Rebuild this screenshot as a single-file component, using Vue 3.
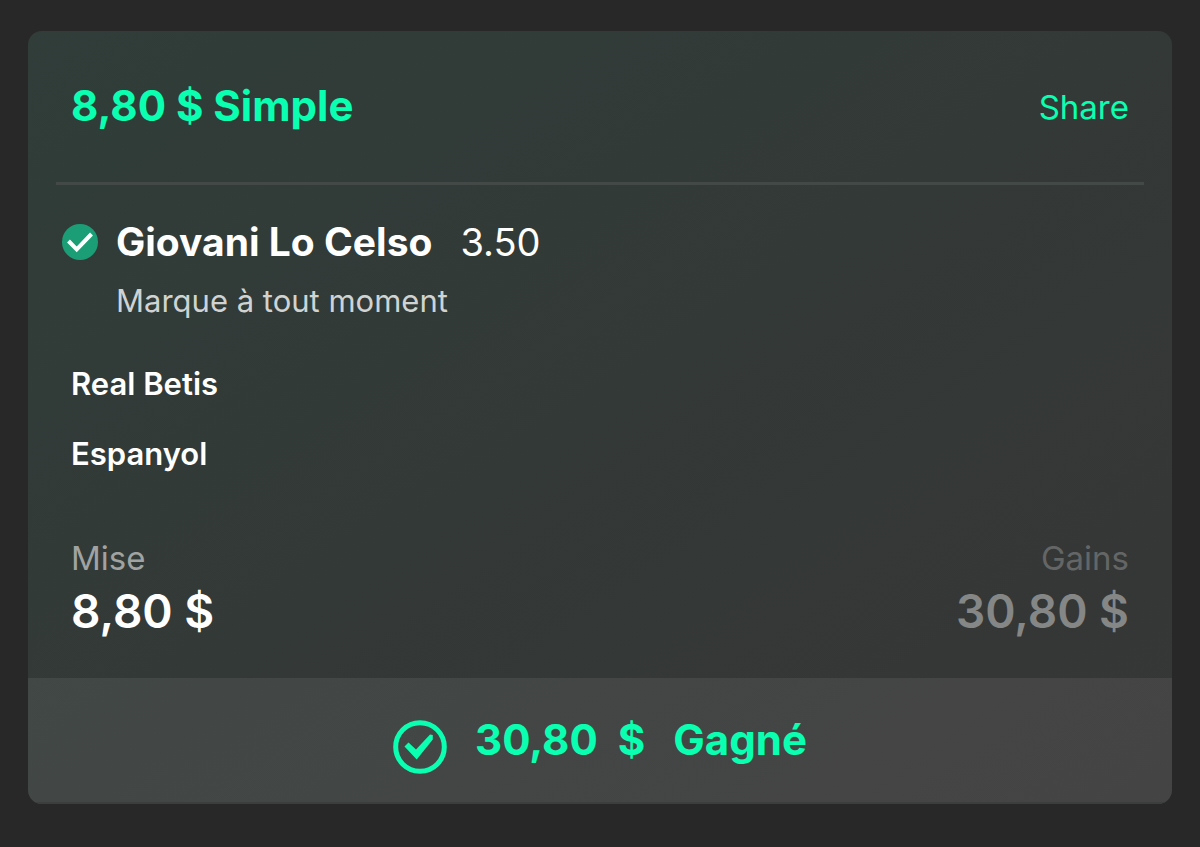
<script setup>
const bet = { stake: '8,80 $', type: 'Simple', player: 'Giovani Lo Celso', odds: '3.50', market: 'Marque à tout moment', teams: ['Real Betis', 'Espanyol'], gains: '30,80 $' }
</script>

<template>
  <main class="page">
    <article class="card">
      <div class="body">
        <header class="head">
          <h1 class="title">{{ bet.stake }} {{ bet.type }}</h1>
          <button class="share" type="button">Share</button>
        </header>
        <section class="selection">
          <svg class="tick" viewBox="0 0 36 36" aria-hidden="true">
            <circle cx="18" cy="18" r="18" fill="#1b9e75" />
            <path d="M6.5 17 14.7 25.3 29.5 10" fill="none" stroke="#fff" stroke-width="4" />
          </svg>
          <h2 class="player">{{ bet.player }}</h2>
          <span class="odds">{{ bet.odds }}</span>
        </section>
        <p class="market">{{ bet.market }}</p>
        <ul class="teams">
          <li v-for="team in bet.teams" :key="team">{{ team }}</li>
        </ul>
        <dl class="amounts">
          <div>
            <dt>Mise</dt>
            <dd>{{ bet.stake }}</dd>
          </div>
          <div class="gains">
            <dt>Gains</dt>
            <dd>{{ bet.gains }}</dd>
          </div>
        </dl>
      </div>
      <footer class="result">
        <svg class="won" viewBox="0 0 54 54" aria-hidden="true">
          <circle cx="27" cy="27" r="24.3" fill="none" stroke="#0bffb0" stroke-width="5" />
          <path d="M11.5 26.5 15.5 22.5 23 29.5 37 14.5 39.8 15V19.5L23.7 39.5Z" fill="#0bffb0" />
        </svg>
        <span>30,80</span><span>$</span><span class="label">Gagné</span>
      </footer>
    </article>
  </main>
</template>

<style>
body {
  margin: 0;
  background: #282828;
}
</style>

<style scoped>
.page {
  padding: 31px 28px 43px;
  font-family: Inter, "Liberation Sans", sans-serif;
  color: #fff;
}
.card {
  overflow: hidden;
  border-radius: 14px;
  background: linear-gradient(to bottom right, #303d39 0%, #333937 50%, #363636 100%);
}
.body {
  padding: 0 28px 36px;
}
.head {
  display: flex;
  align-items: center;
  justify-content: space-between;
  padding: 49px 15px 50px;
  border-bottom: 3px solid #424947;
}
h1, h2, p, ul, dl, dd {
  margin: 0;
}
.title {
  font-size: 42px;
  line-height: 52px;
  font-weight: 700;
  color: #0bffb0;
}
.share {
  padding: 2px 0 0;
  border: 0;
  background: none;
  font: inherit;
  font-size: 33px;
  line-height: 40px;
  color: #0bffb0;
}
.selection {
  display: flex;
  align-items: center;
  padding: 32px 0 0 6px;
}
.tick {
  width: 36px;
  height: 36px;
}
.player {
  margin: 0 28px 0 18px;
  font-size: 39px;
  line-height: 50px;
  font-weight: 700;
}
.odds {
  font-size: 38px;
}
.market {
  padding: 14px 0 0 60px;
  font-size: 31px;
  line-height: 40px;
  color: #d0d3d2;
}
.teams {
  display: grid;
  gap: 30px;
  padding: 43px 15px 0;
  list-style: none;
  font-size: 31px;
  line-height: 40px;
  font-weight: 600;
}
.amounts {
  display: flex;
  justify-content: space-between;
  padding: 62px 15px 0;
}
dt {
  font-size: 33px;
  line-height: 44px;
  color: #a0a3a2;
}
dd {
  font-size: 46px;
  line-height: 62px;
  font-weight: 600;
}
.gains {
  text-align: right;
}
.gains dt {
  color: #646666;
}
.gains dd {
  color: #858686;
}
.result {
  display: flex;
  align-items: center;
  justify-content: center;
  padding: 27px 0 28px;
  border-bottom: 2px solid #3c3e3d;
  font-size: 42px;
  line-height: 64px;
  font-weight: 700;
  color: #0bffb0;
  background: rgba(255, 255, 255, 0.075);
}
.won {
  width: 54px;
  height: 54px;
  margin: 15px 28px 0 0;
}
.result span + span {
  margin-left: 20px;
}
.result span + .label {
  margin-left: 28px;
}
</style>
